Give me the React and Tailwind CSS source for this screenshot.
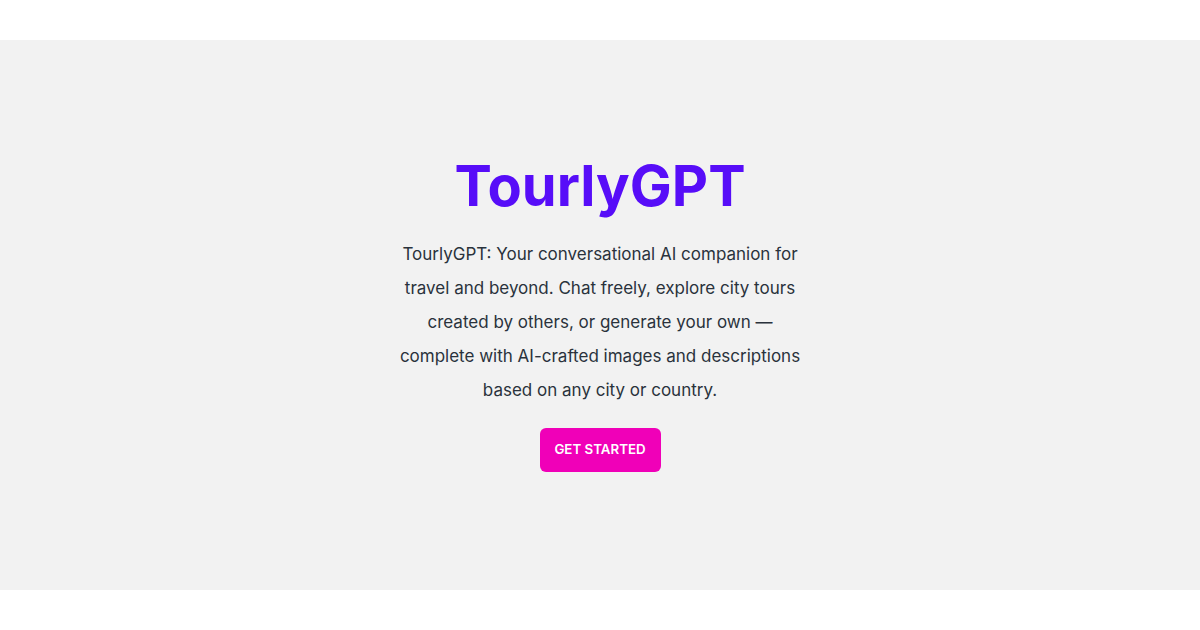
export default function App() {
  return (
    <div className="min-h-screen bg-white font-['Inter',sans-serif] flex flex-col">
      <div className="h-10 bg-white"></div>
      <div className="h-[550px] bg-[#f2f2f2] flex items-center justify-center text-center">
        <div className="flex flex-col items-center">
          <h1 className="text-[56px] leading-none font-bold text-[#570df8]">
            TourlyGPT
          </h1>
          <p className="mt-[23px] w-[404px] text-[17px] leading-[34px] text-[#2a323c]">
            TourlyGPT: Your conversational AI companion for travel and beyond.
            Chat freely, explore city tours created by others, or generate your
            own — complete with AI-crafted images and descriptions based on any
            city or country.
          </p>
          <button className="mt-[21px] h-[44px] w-[121px] rounded-md bg-[#f000b8] text-white text-[13.3px] font-semibold uppercase">
            Get Started
          </button>
        </div>
      </div>
      <div className="h-10 bg-white"></div>
    </div>
  );
}
